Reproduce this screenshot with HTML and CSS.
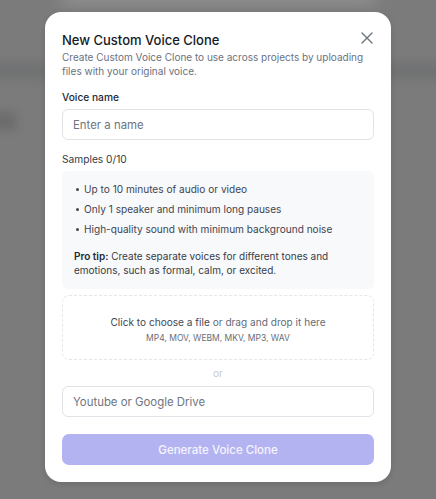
FILE: index.html
```html
<!DOCTYPE html>
<html lang="en">
<head>
<meta charset="utf-8">
<title>New Custom Voice Clone</title>
<link rel="stylesheet" href="styles.css">
</head>
<body>
<div class="backdrop">
  <div class="bg-top"></div>
  <div class="bg-band"></div>
  <div class="bg-blob"></div>
</div>
<div class="overlay">
  <div class="modal">
    <div class="head">
      <h1 class="title">New Custom Voice Clone</h1>
      <button class="close" aria-label="Close">
        <svg width="12" height="12" viewBox="0 0 12 12"><path d="M1 1L11 11M11 1L1 11" stroke="#6b7280" stroke-width="1.4" stroke-linecap="round" fill="none"/></svg>
      </button>
    </div>
    <p class="subtitle">Create Custom Voice Clone to use across projects by uploading files with your original voice.</p>
    <label class="label">Voice name</label>
    <div class="input"><span class="placeholder">Enter a name</span></div>
    <div class="label samples">Samples 0/10</div>
    <div class="info">
      <ul class="list">
        <li>Up to 10 minutes of audio or video</li>
        <li>Only 1 speaker and minimum long pauses</li>
        <li>High-quality sound with minimum background noise</li>
      </ul>
      <p class="tip"><strong>Pro tip:</strong> Create separate voices for different tones and emotions, such as formal, calm, or excited.</p>
    </div>
    <div class="drop">
      <div class="drop-main"><span class="drop-strong">Click to choose a file</span> or drag and drop it here</div>
      <div class="drop-sub">MP4, MOV, WEBM, MKV, MP3, WAV</div>
    </div>
    <div class="or">or</div>
    <div class="input link"><span class="placeholder">Youtube or Google Drive</span></div>
    <button class="generate">Generate Voice Clone</button>
  </div>
</div>
</body>
</html>
```
FILE: styles.css
```css
* { box-sizing: border-box; }
html, body { margin: 0; padding: 0; }
body {
  width: 436px;
  height: 499px;
  overflow: hidden;
  background: #7b7b7b;
  font-family: Inter, "Noto Sans", sans-serif;
  position: relative;
}
.backdrop {
  position: absolute;
  inset: 0;
  overflow: hidden;
}
.bg-top {
  position: absolute;
  left: 60px; right: 60px; top: -20px; height: 26px;
  background: #8e8e8e;
  filter: blur(8px);
}
.bg-band {
  position: absolute;
  left: -20px; right: -20px; top: 64px; height: 14px;
  background: #6f7071;
  filter: blur(6px);
}
.bg-blob {
  position: absolute;
  left: -10px; top: 112px; width: 26px; height: 18px;
  background: #6c6c6c;
  filter: blur(5px);
}
.overlay {
  position: absolute;
  inset: 0;
  display: flex;
  justify-content: center;
  align-items: flex-start;
  padding-top: 12px;
}
.modal {
  width: 346px;
  height: 470px;
  background: #fff;
  border-radius: 16px;
  padding: 18px 17px 17px;
  display: flex;
  flex-direction: column;
  box-shadow: 0 2px 6px rgba(0,0,0,0.12);
}
.head {
  display: flex;
  justify-content: space-between;
  align-items: center;
  height: 20px;
}
.title {
  margin: 0;
  font-size: 13px;
  line-height: 20px;
  font-weight: 500;
  color: #151a26;
}
.subtitle {
  margin: 0;
  font-size: 10px;
  line-height: 14px;
  color: #6b7280;
}
.close {
  border: 0;
  background: none;
  padding: 0;
  margin: -4px -1px 0 0;
  width: 16px;
  height: 16px;
  display: flex;
  align-items: center;
  justify-content: center;
}
.label {
  margin-top: 11px;
  font-size: 10.2px;
  line-height: 16px;
  font-weight: 500;
  color: #232935;
  display: block;
}
.samples { font-weight: 400; color: #343a46; }
.input {
  margin-top: 4px;
  height: 31px;
  border: 1px solid #e1e3e8;
  border-radius: 6px;
  display: flex;
  align-items: center;
  padding-left: 10px;
}
.placeholder {
  font-size: 11.4px;
  color: #6e7480;
}
.info {
  margin-top: 4px;
  background: #f8f9fb;
  border-radius: 6px;
  padding: 8px 12px 12px;
  height: 118px;
}
.list {
  margin: 0 0 10px;
  padding: 0 0 0 10px;
  list-style: none;
}
.list li {
  position: relative;
  font-size: 10.1px;
  line-height: 20px;
  color: #3f4551;
}
.list li::before {
  content: "";
  position: absolute;
  left: -8px;
  top: 9px;
  width: 3px;
  height: 3px;
  border-radius: 50%;
  background: #3f4551;
}
.tip {
  margin: 0;
  font-size: 10px;
  line-height: 14px;
  color: #363c48;
}
.tip strong { font-weight: 600; color: #232935; }
.drop {
  margin-top: 6px;
  height: 65px;
  border: 1px dashed #e4e6ea;
  border-radius: 7px;
  display: flex;
  flex-direction: column;
  align-items: center;
  justify-content: center;
  padding-top: 4px;
}
.drop-main {
  font-size: 10.1px;
  line-height: 16px;
  color: #656b76;
}
.drop-strong { color: #434955; }
.drop-sub {
  font-size: 8.5px;
  line-height: 14px;
  color: #676d78;
  margin-top: 1px;
}
.or {
  text-align: center;
  font-size: 10px;
  line-height: 14px;
  color: #c7cad0;
  margin-top: 6px;
}
.link { margin-top: 6px; }
.generate {
  margin-top: 17px;
  height: 31px;
  border: 0;
  border-radius: 7px;
  background: #b4b3f1;
  color: #f5f5fe;
  font-family: Inter, "Noto Sans", sans-serif;
  font-size: 11.5px;
  font-weight: 500;
}
```
